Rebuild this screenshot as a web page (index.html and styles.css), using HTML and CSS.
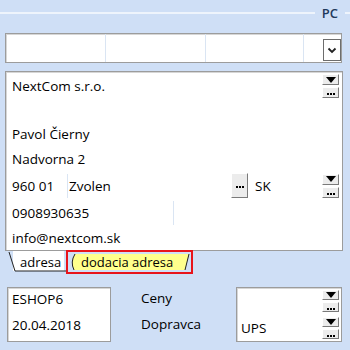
FILE: index.html
```html
<!DOCTYPE html>
<html>
<head>
<meta charset="utf-8">
<link rel="stylesheet" href="styles.css">
</head>
<body>
<div class="page">
  <div class="header">
    <div class="hline"></div>
    <div class="pc">PC</div>
    <div class="hline tail"></div>
  </div>

  <div class="topinput">
    <div class="cell"></div>
    <div class="cell"></div>
    <div class="cell"></div>
    <div class="cell last">
      <div class="ddbtn">
        <svg width="10" height="7" viewBox="0 0 10 7"><path d="M1.5 1.5 L5 5 L8.5 1.5" fill="none" stroke="#222" stroke-width="1.8"/></svg>
      </div>
    </div>
  </div>

  <div class="mainbox">
    <div class="row r1">
      <span class="txt">NextCom s.r.o.</span>
      <div class="stack">
        <div class="sbtn tri"><svg width="10" height="6" viewBox="0 0 10 6"><path d="M0 0 H10 L5 6 Z" fill="#000"/></svg></div>
        <div class="sbtn dots"><span></span><span></span><span></span></div>
      </div>
    </div>
    <div class="row r2"></div>
    <div class="row r3"><span class="txt">Pavol Čierny</span></div>
    <div class="row r4"><span class="txt">Nadvorna 2</span></div>
    <div class="row r5">
      <span class="txt zip">960 01</span>
      <span class="sep"></span>
      <span class="txt city">Zvolen</span>
      <div class="ebtn"><span></span><span></span><span></span></div>
      <span class="txt country">SK</span>
      <div class="stack">
        <div class="sbtn tri"><svg width="10" height="6" viewBox="0 0 10 6"><path d="M0 0 H10 L5 6 Z" fill="#000"/></svg></div>
        <div class="sbtn dots"><span></span><span></span><span></span></div>
      </div>
    </div>
    <div class="row r6"><span class="txt phone">0908930635</span><span class="sep2"></span></div>
    <div class="row r7"><span class="txt">info@nextcom.sk</span></div>
  </div>

  <div class="tabs">
    <div class="tab tab1">
      <svg class="tabshape" width="59" height="22" viewBox="0 0 59 22"><path d="M1 1 L7 20 H58" fill="none" stroke="#222" stroke-width="1"/></svg>
      <span class="tablabel">adresa</span>
    </div>
    <div class="tab tab2">
      <svg class="tabshape" width="123" height="20" viewBox="0 0 123 20"><path d="M7 2 H121 L117 18 H6 Q2 10 7 2 Z" fill="#ffff8c"/><path d="M7 2 Q2 10 6 18" fill="none" stroke="#222" stroke-width="1"/><path d="M121 2 L117 18" fill="none" stroke="#222" stroke-width="1"/></svg>
      <span class="tablabel">dodacia adresa</span>
    </div>
  </div>

  <div class="bottom">
    <div class="leftbox">
      <div class="brow">ESHOP6</div>
      <div class="brow">20.04.2018</div>
    </div>
    <div class="labels">
      <div class="brow">Ceny</div>
      <div class="brow">Dopravca</div>
    </div>
    <div class="rightbox">
      <div class="rb-text">
        <div class="brow"></div>
        <div class="brow ups">UPS</div>
      </div>
      <div class="rb-btns">
        <div class="sbtn tri"><svg width="10" height="6" viewBox="0 0 10 6"><path d="M0 0 H10 L5 6 Z" fill="#000"/></svg></div>
        <div class="sbtn dots"><span></span><span></span><span></span></div>
        <div class="sbtn tri"><svg width="10" height="6" viewBox="0 0 10 6"><path d="M0 0 H10 L5 6 Z" fill="#000"/></svg></div>
        <div class="sbtn dots"><span></span><span></span><span></span></div>
      </div>
    </div>
  </div>
</div>
</body>
</html>
```

FILE: styles.css
```css
* { box-sizing: border-box; }
html, body { margin: 0; padding: 0; }
body {
  width: 350px;
  height: 350px;
  background: #cfdff6;
  font-family: "Open Sans", "Noto Sans", sans-serif;
  font-size: 13.5px;
  color: #000;
  overflow: hidden;
}
.page { display: flex; flex-direction: column; }

.header { height: 26px; display: flex; align-items: center; }
.hline { flex: 1; height: 2px; background: #eef4fc; }
.hline.tail { flex: 0 0 5px; }
.pc { padding: 0 7px 0 7px; color: #1e395b; font-size: 13px; font-weight: 600; }

.topinput {
  margin: 7px 8px 0 5px;
  height: 30px;
  background: #fff;
  border: 1px solid #9c9c9c;
  box-shadow: inset 1px 1px 0 #d6d6d6;
  display: flex;
}
.cell { width: 100px; border-right: 1px solid #dae5f3; }
.cell:nth-child(3) { width: 98px; }
.cell.last { flex: 1; border-right: 0; display: flex; justify-content: flex-end; align-items: flex-end; padding: 0 0 1px 0; }
.ddbtn {
  width: 18px; height: 22px;
  border: 1px solid #6d6d6d;
  background: #fff;
  display: flex; align-items: center; justify-content: center;
}

.mainbox {
  margin: 8px 7px 0 5px;
  height: 180px;
  background: #fff;
  border: 1px solid #9c9c9c;
  box-shadow: inset 1px 1px 0 #d6d6d6;
  padding: 1px 3px 0 6px;
  display: grid;
  grid-template-rows: 26px 23px 24px 25px 29px 25px 25px;
}
.row { display: flex; align-items: center; position: relative; }
.txt { white-space: nowrap; }
.zip { width: 55px; }
.sep { width: 1px; height: 24px; background: #dae5f3; margin-right: 1px; }
.city { width: 162px; }
.country { margin-left: 7px; }
.sep2 { position: absolute; left: 161px; top: 1px; width: 1px; height: 24px; background: #dae5f3; }
.r1 .stack { align-self: flex-start; margin-top: 1px; }
.stack { margin-left: auto; display: flex; flex-direction: column; gap: 2px; }
.sbtn {
  width: 17px; height: 11px;
  background: #ececec;
  border-top: 1px solid #fff;
  border-left: 1px solid #fff;
  border-right: 1px solid #7a7a7a;
  border-bottom: 1px solid #7a7a7a;
  display: flex; justify-content: center;
}
.sbtn.tri { align-items: center; }
.sbtn.dots { align-items: flex-end; gap: 1px; padding-bottom: 2px; }
.sbtn.dots span, .ebtn span { width: 2px; height: 2px; background: #000; }
.ebtn {
  width: 17px; height: 25px;
  background: #ececec;
  border-top: 1px solid #fff;
  border-left: 1px solid #fff;
  border-right: 1px solid #7a7a7a;
  border-bottom: 1px solid #7a7a7a;
  display: flex; align-items: center; justify-content: center; gap: 1px;
  padding-top: 2px;
}

.tabs { height: 24px; display: flex; padding-left: 8px; }
.tab { position: relative; display: flex; align-items: center; }
.tabshape { position: absolute; left: 0; top: 0; }
.tablabel { position: relative; font-size: 13px; }
.tab1 { width: 59px; height: 22px; padding-left: 12px; background: linear-gradient(#fff,#fff) no-repeat 5px 0 / 51px 20px; }
.tab2 {
  width: 127px; height: 24px;
  border: 2px solid #e8141b;
  margin-top: -1px;
  margin-left: -1px;
  padding-left: 13px;
}

.bottom { margin-top: 12px; display: flex; padding-left: 7px; height: 55px; }
.leftbox {
  width: 104px; height: 55px;
  background: #fff;
  border: 1px solid #9c9c9c;
  box-shadow: inset 1px 1px 0 #d6d6d6;
  padding: 0 0 0 4px;
}
.brow { height: 26px; display: flex; align-items: center; }
.leftbox .brow:first-child { margin-top: -2px; }
.labels { margin-left: 30px; width: 95px; }
.labels .brow:first-child { margin-top: -2px; }
.rightbox {
  width: 106px; height: 55px;
  background: #fff;
  border: 1px solid #9c9c9c;
  box-shadow: inset 1px 1px 0 #d6d6d6;
  display: flex;
  padding: 2px 2px 0 4px;
}
.rb-text { flex: 1; }
.ups { margin-top: -1px; }
.rb-btns { display: flex; flex-direction: column; gap: 2px; }
.rb-btns .sbtn { height: 10px; }
.rb-btns .sbtn.dots { padding-bottom: 1px; }
.rb-btns .sbtn:nth-child(3) { margin-top: 3px; }
```
